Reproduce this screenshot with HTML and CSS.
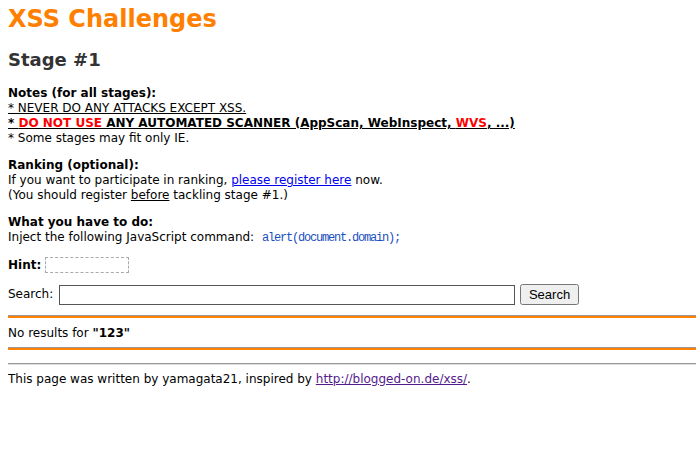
FILE: index.html
```html
<!DOCTYPE html>
<html lang="en">
<head>
<link rel="stylesheet" href="styles.css">
</head>
<body>
<h1 class="site-title">XSS Challenges</h1>
<h2 class="stage-title">Stage #1</h2>

<div class="block">
  <b>Notes (for all stages):</b><br>
  <u>* NEVER DO ANY ATTACKS EXCEPT XSS.</u><br>
  <u><b>* <span class="red">DO NOT USE</span> ANY AUTOMATED SCANNER (AppScan, WebInspect, <span class="red">WVS</span>, ...)</b></u><br>
  * Some stages may fit only IE.
</div>

<div class="block">
  <b>Ranking (optional):</b><br>
  If you want to participate in ranking, <a href="#" class="link">please register here</a> now.<br>
  (You should register <u>before</u> tackling stage #1.)
</div>

<div class="block task">
  <b>What you have to do:</b><br>
  Inject the following JavaScript command: <code class="cmd">alert(document.domain);</code>
</div>

<div class="block hint-row">
  <b>Hint:</b> <span class="hint-box"></span>
</div>

<form class="search-row" onsubmit="return false">
  Search: <input type="text" class="search-input"> <input type="submit" value="Search" class="search-btn">
</form>

<div class="result">
  No results for <b>"123"</b>
</div>

<hr class="footer-rule">
<div class="footer">
  This page was written by yamagata21, inspired by <a href="#" class="visited">http://blogged-on.de/xss/</a>.
</div>
</body>
</html>
```

FILE: styles.css
```css
html {
  background: #fff;
}
body {
  margin: 8px 0 8px 8px;
  font-family: "DejaVu Sans", Verdana, sans-serif;
  font-size: 12px;
  line-height: 15px;
  color: #000;
}
.site-title {
  color: #ff8000;
  font-size: 24px;
  line-height: 28px;
  margin: -3px 0 16px;
}
.stage-title {
  color: #333;
  font-size: 18px;
  line-height: 22px;
  margin: 0 0 15px;
}
.block {
  margin: 0 0 12px;
}
.task {
  margin-bottom: 11px;
}
.red {
  color: #ff0000;
}
.link {
  color: #0000ee;
}
.visited {
  color: #551a8b;
}
.cmd {
  font-family: "Liberation Mono", monospace;
  font-size: 12px;
  letter-spacing: -1.2px;
  margin-left: 4px;
  color: #1a4fc0;
}
.hint-box {
  display: inline-block;
  width: 82px;
  height: 14px;
  border: 1px dashed #aaa;
  vertical-align: middle;
}
.hint-row {
  margin-bottom: 11px;
}
.search-row {
  margin: 0 0 11px;
}
.search-input {
  width: 450px;
  height: 16px;
  border: 1px solid #555;
  padding: 1px 2px;
  margin-left: 2px;
  vertical-align: middle;
}
.search-btn {
  font-family: "Liberation Sans", Arial, sans-serif;
  font-size: 13px;
  height: 21px;
  padding: 0 7px;
  margin-left: 1px;
  vertical-align: middle;
}
.result {
  border-top: 2px solid #ff8000;
  border-bottom: 2px solid #ff8000;
  box-shadow: 0 -1px 0 #999, inset 0 -1px 0 #999;
  padding: 8px 0 7px;
}
.footer-rule {
  margin: 13px 0 7px;
  border: 0;
  border-top: 1px solid #999;
  border-bottom: 1px solid #ddd;
}
```
